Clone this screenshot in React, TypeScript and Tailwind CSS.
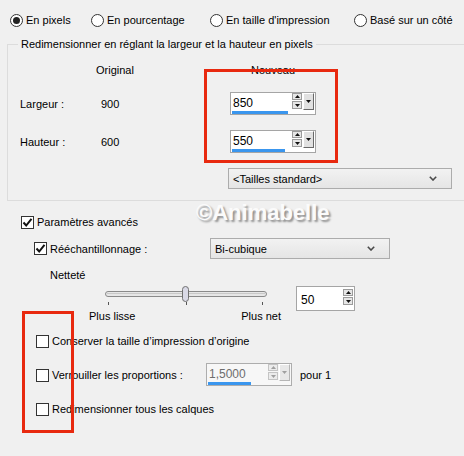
import React from 'react';

const font = { fontFamily: '"Liberation Sans", Arial, sans-serif' };

function Radio({ checked, label, width }: { checked?: boolean; label: string; width: string }) {
  return (
    <div className={`flex items-center ${width}`}>
      <span className="flex h-[13px] w-[13px] items-center justify-center rounded-full border border-[#333] bg-white">
        {checked && <span className="h-[7px] w-[7px] rounded-full bg-[#222]" />}
      </span>
      <span className="ml-[3px]">{label}</span>
    </div>
  );
}

function Check({ checked }: { checked?: boolean }) {
  return (
    <span className="flex h-[13px] w-[13px] shrink-0 items-center justify-center border border-[#333] bg-white">
      {checked && (
        <svg width="11" height="11" viewBox="0 0 11 11">
          <path d="M1.5 5.5 L4.2 8.5 L9.5 1.8" fill="none" stroke="#111" strokeWidth="2" />
        </svg>
      )}
    </span>
  );
}

function Tri({ up, color = '#111' }: { up?: boolean; color?: string }) {
  return (
    <svg width="5" height="3" viewBox="0 0 5 3">
      <path d={up ? 'M0 3 L2.5 0 L5 3 Z' : 'M0 0 L5 0 L2.5 3 Z'} fill={color} />
    </svg>
  );
}

function SpinButtons({ disabled }: { disabled?: boolean }) {
  const c = disabled ? '#a0a0a0' : '#111';
  const b = disabled ? 'border-[#c4c4c4] bg-[#ececec]' : 'border-[#9b9b9b] bg-[#e6e6e6]';
  return (
    <div className="ml-[1px] flex w-[10px] flex-col gap-[1px]">
      <span className={`flex h-[7px] items-center justify-center border ${b}`}>
        <Tri up color={c} />
      </span>
      <span className={`flex h-[8px] items-center justify-center border ${b}`}>
        <Tri color={c} />
      </span>
    </div>
  );
}

function Spin({ value, bar, disabled }: { value: string; bar: string; disabled?: boolean }) {
  return (
    <div
      className={`flex h-[23px] w-[86px] border ${
        disabled ? 'border-[#adadad] bg-[#f7f7f7]' : 'border-[#a5a5a5] bg-white'
      }`}
    >
      <div className="flex w-[60px] flex-col pt-[2px]">
        <span
          className={`h-[16px] pl-[2px] text-[12px] leading-[16px] ${disabled ? 'text-[#6d6d6d]' : 'text-black'}`}
        >
          {value}
        </span>
        <span className={`ml-[1px] h-[3px] bg-[#3a96ee] ${bar}`} />
      </div>
      <SpinButtons disabled={disabled} />
      <div
        className={`ml-[1px] flex h-[17px] w-[11px] items-center justify-center border-t border-l border-t-white border-l-white border-r border-b ${
          disabled ? 'border-r-[#b5b5b5] border-b-[#b5b5b5] bg-[#e8e8e8]' : 'border-r-[#696969] border-b-[#696969] bg-[#e1e1e1]'
        }`}
      >
        <Tri color={disabled ? '#a0a0a0' : '#111'} />
      </div>
    </div>
  );
}

function Select({ label, width }: { label: string; width: string }) {
  return (
    <div
      className={`flex h-[21px] ${width} items-center justify-between border border-[#acacac] bg-gradient-to-b from-[#f2f2f2] to-[#e5e5e5] pl-[4px] pr-[14px]`}
    >
      <span>{label}</span>
      <svg width="8" height="5" viewBox="0 0 8 5">
        <path d="M0.8 0.8 L4 4 L7.2 0.8" fill="none" stroke="#4a4a4a" strokeWidth="1.6" />
      </svg>
    </div>
  );
}

function Slider() {
  return (
    <svg width="200" height="20" viewBox="0 0 200 20">
      <rect x="17.5" y="5.5" width="161" height="5" rx="2.5" fill="#e6e6e6" stroke="#8a8a8a" />
      <line x1="19" y1="7.5" x2="177" y2="7.5" stroke="#c9c9c9" />
      <rect x="94.5" y="0.5" width="6" height="15" rx="3" fill="#d9d9e6" stroke="#707070" />
      <line x1="20.5" y1="16" x2="20.5" y2="19" stroke="#555" />
      <line x1="98.5" y1="16" x2="98.5" y2="19" stroke="#555" />
      <line x1="174.5" y1="16" x2="174.5" y2="19" stroke="#555" />
    </svg>
  );
}

export default function App() {
  return (
    <div
      className="relative h-[456px] w-[464px] overflow-hidden bg-[#f0f0f0] text-[11px] leading-[14px] text-black"
      style={font}
    >
      {/* Mode radios */}
      <div className="flex pt-[13px] pl-[10px]">
        <Radio checked label="En pixels" width="w-[81px]" />
        <Radio label="En pourcentage" width="w-[119px]" />
        <Radio label="En taille d'impression" width="w-[144px]" />
        <Radio label="Basé sur un côté" width="w-[110px]" />
      </div>

      {/* Pixel group */}
      <fieldset className="mt-[10px] ml-[7px] w-[480px] border-t border-l border-b border-[#dcdcdc] pb-[11px]">
        <legend className="ml-[10px] px-[3px] leading-[14px]">
          Redimensionner en réglant la largeur et la hauteur en pixels
        </legend>
        <div className="mt-[11px] flex h-[16px] items-center">
          <span className="ml-[88px] w-[134px]">Original</span>
          <span className="w-[86px] text-center">Nouveau</span>
        </div>
        <div className="mt-[14px] flex items-center">
          <span className="ml-[12px] w-[81px]">Largeur :</span>
          <span className="w-[129px]">900</span>
          <Spin value="850" bar="w-[56px]" />
        </div>
        <div className="mt-[15px] flex items-center">
          <span className="ml-[12px] w-[81px]">Hauteur :</span>
          <span className="w-[129px]">600</span>
          <Spin value="550" bar="w-[53px]" />
        </div>
        <div className="mt-[15px] ml-[220px]">
          <Select label="<Tailles standard>" width="w-[224px]" />
        </div>
      </fieldset>

      {/* Advanced */}
      <div className="mt-[14px] flex h-[14px] items-center pl-[21px]">
        <Check checked />
        <span className="ml-[3px]">Paramètres avancés</span>
      </div>
      <div className="mt-[9px] flex items-center pl-[34px]">
        <Check checked />
        <span className="ml-[3px] w-[160px]">Rééchantillonnage :</span>
        <Select label="Bi-cubique" width="w-[180px]" />
      </div>
      <div className="mt-[9px] h-[14px] pl-[50px]">Netteté</div>
      <div className="mt-[4px] flex items-start">
        <div className="ml-[88px] flex w-[200px] flex-col">
          <Slider />
          <div className="mt-[3px] flex justify-between pr-[7px] pl-[1px]">
            <span>Plus lisse</span>
            <span>Plus net</span>
          </div>
        </div>
        <div className="ml-[8px] flex h-[25px] w-[59px] border border-[#a5a5a5] bg-white pt-[2px]">
          <span className="w-[45px] pt-[4px] pl-[4px] text-[12px]">50</span>
          <SpinButtons />
        </div>
      </div>

      {/* Options */}
      <div className="mt-[6px] flex flex-col gap-[10px] pl-[36px]">
        <div className="flex h-[24px] items-center">
          <Check />
          <span className="ml-[3px]">Conserver la taille d’impression d’origine</span>
        </div>
        <div className="flex h-[24px] items-center">
          <Check />
          <span className="ml-[3px] w-[154px]">Verrouiller les proportions :</span>
          <div className="h-[24px]">
            <Spin value="1,5000" bar="w-[43px]" disabled />
          </div>
          <span className="ml-[8px]">pour 1</span>
        </div>
        <div className="flex h-[24px] items-center">
          <Check />
          <span className="ml-[3px]">Redimensionner tous les calques</span>
        </div>
      </div>

      {/* Annotations over the dialog */}
      <div className="absolute top-[69px] left-[204px] h-[94px] w-[134px] border-[3px] border-[#e8290f]" />
      <div className="absolute top-[311px] left-[22px] h-[122px] w-[52px] border-[3px] border-[#e8290f]" />
      <div className="absolute top-[200px] left-[196px] text-[22px] leading-[26px] font-bold text-[#fbfbfb] [text-shadow:2px_2px_2px_rgba(0,0,0,0.4)]">
        ©Animabelle
      </div>
    </div>
  );
}
